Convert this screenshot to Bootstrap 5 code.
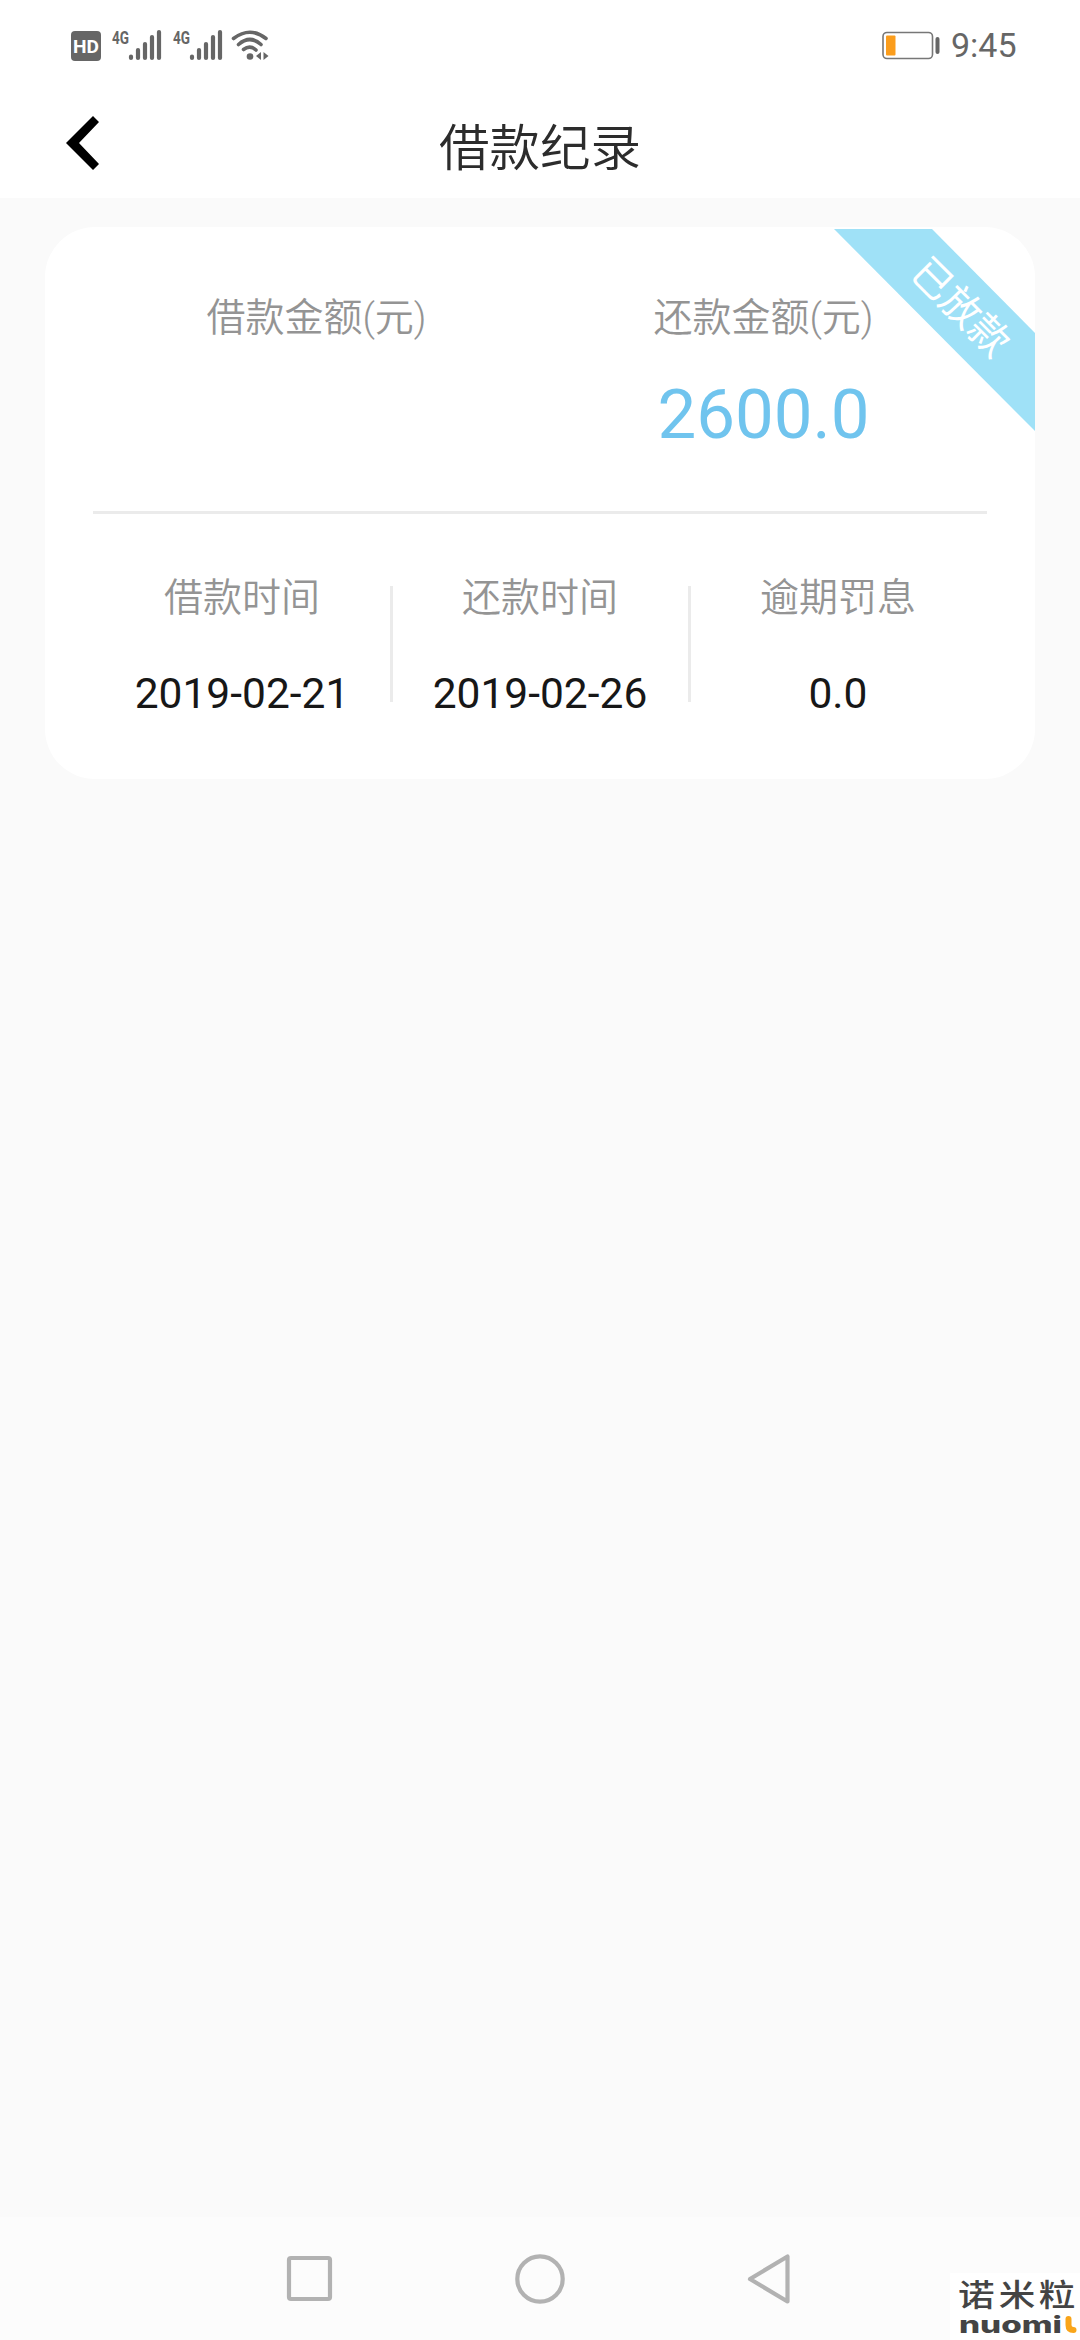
<!DOCTYPE html>
<html lang="zh-CN">
<head>
<meta charset="utf-8">
<meta name="viewport" content="width=device-width, initial-scale=1">
<title>借款纪录</title>
<link rel="stylesheet" href="https://cdn.jsdelivr.net/npm/bootstrap@5.3.0/dist/css/bootstrap.min.css">
<style>
body{font-family:Roboto,"Noto Sans CJK SC",sans-serif;background:#fafafa;min-height:2340px;color:#171717}
.status{height:90px;padding:0 66px 0 71px;color:#666}
.status svg{display:block}
.clock{font-size:34px;line-height:40px;width:63px;margin-left:11px;white-space:nowrap}
.titlebar{height:108px;display:grid;grid-template-columns:1fr auto 1fr;align-items:center}
.titlebar h1{font-size:50.5px;line-height:60px;font-weight:350;color:#2c2c2c;padding-top:9px}
.backlink{padding-left:66px;padding-bottom:2px}
.loan{margin:29px 45px 0;height:552px;border:0;border-radius:50px;padding:0 48px}
.amounts{height:284px;padding-top:62px}
.caption{font-size:39px;line-height:58px;font-weight:350;color:#949494;white-space:nowrap}
.sum{font-size:69px;line-height:82px;color:#70c4ee;margin-top:27px}
.rule{height:3px;background:#ebebeb}
.details{padding-top:55px}
.details .cell+.cell::before{content:"";position:absolute;left:-1px;top:17px;width:3px;height:116px;background:#ebebeb}
.cell{position:relative}
.val{font-size:42.5px;line-height:50px;margin-top:42px}
.ribbon{position:absolute;top:2px;right:0;width:201px;height:202px;background:#9fe1f7;clip-path:polygon(0 0,98px 0,201px 104px,201px 202px)}
.ribbon span{position:absolute;left:126px;top:79px;font-size:40px;line-height:48px;color:#fff;transform:translate(-50%,-50%) rotate(45deg);white-space:nowrap}
.softkeys{height:123px;background:#fcfcfc}
.brand{position:absolute;right:0;bottom:0;width:130px;height:67px;background:#fff}
.brand svg{display:block}
</style>
</head>
<body class="d-flex flex-column position-relative">
<header class="bg-white">
  <div class="status d-flex align-items-center justify-content-between">
    <svg width="200" height="40" viewBox="71 25 200 40" fill="#666">
      <rect x="71" y="31" width="30" height="30" rx="4"/>
      <text x="73" y="52.5" font-family="Roboto" font-weight="700" font-size="18" textLength="26" lengthAdjust="spacingAndGlyphs" fill="#fff">HD</text>
      <g id="sig">
        <text x="112" y="43.5" font-family="Roboto" font-weight="700" font-size="19" textLength="17" lengthAdjust="spacingAndGlyphs">4G</text>
        <g stroke="#666" stroke-width="4.2" stroke-linecap="round"><path d="M131 56.5v1.500M138 50v8M145 44v14M152 37v21M159 32v26"/></g>
      </g>
      <use href="#sig" x="61"/>
      <g fill="none" stroke="#666" stroke-width="3.600" stroke-linecap="round"><path d="M233.500 38.500Q250 26 266 38.500M238.500 44.500Q250 34.500 261 44.500M243.500 49.500Q250 44.500 256 50"/></g>
      <circle cx="250" cy="56.500" r="3.300"/><path d="M261 52v8l-5-4zM263.500 52v8l5-4z"/>
    </svg>
    <div class="d-flex align-items-center">
      <svg width="58" height="30" viewBox="881 30 58 30"><rect x="882" y="32.500" width="49.500" height="26" rx="4" fill="none" stroke="#777" stroke-width="1.600"/><rect x="885" y="35.500" width="9.500" height="20" rx="1" fill="#fb9d1c"/><rect x="934.500" y="37" width="4" height="17" rx="2" fill="#666"/></svg>
      <span class="clock">9:45</span>
    </div>
  </div>
  <nav class="titlebar">
    <a class="backlink" href="#" aria-label="返回"><svg class="d-block" width="34" height="54" viewBox="0 0 34 54"><path d="M27 0l6 6-20 21 20 21-6 6L0 27z"/></svg></a>
    <h1 class="m-0">借款纪录</h1>
    <span></span>
  </nav>
</header>
<main class="flex-grow-1">
  <section class="card loan">
    <div class="row g-0 amounts text-center">
      <div class="col-6"><div class="caption">借款金额(元)</div></div>
      <div class="col-6"><div class="caption">还款金额(元)</div><div class="sum">2600.0</div></div>
    </div>
    <div class="rule"></div>
    <div class="row g-0 details text-center">
      <div class="col-4 cell"><div class="caption">借款时间</div><div class="val">2019-02-21</div></div>
      <div class="col-4 cell"><div class="caption">还款时间</div><div class="val">2019-02-26</div></div>
      <div class="col-4 cell"><div class="caption">逾期罚息</div><div class="val">0.0</div></div>
    </div>
    <div class="ribbon"><span>已放款</span></div>
  </section>
</main>
<footer class="softkeys">
  <svg class="d-block mx-auto" width="560" height="123" viewBox="260 2217 560 123" fill="none" stroke="#b2b2b2" stroke-width="4.200" stroke-linejoin="round">
    <rect x="289" y="2258" width="41" height="41" rx="2"/><circle cx="540" cy="2279" r="22.700"/><path d="M787.500 2256.500v45L750 2279z"/>
  </svg>
  <div class="brand">
    <svg width="130" height="67" viewBox="0 0 130 67" fill="#444">
      <text transform="translate(8 32.500) scale(1.180 1)" x="0 34.500 68.500" font-family="Noto Sans CJK SC" font-weight="500" font-size="31">诺米粒</text>
      <text x="9" y="60" font-family="Inter" font-weight="800" font-size="23.500" textLength="103" lengthAdjust="spacingAndGlyphs">nuomi</text>
      <path d="M118.500 46v6q0 5 5 5" fill="none" stroke="#f9a51a" stroke-width="6" stroke-linecap="round"/>
    </svg>
  </div>
</footer>
<script src="https://cdn.jsdelivr.net/npm/bootstrap@5.3.0/dist/js/bootstrap.bundle.min.js"></script>
</body>
</html>
